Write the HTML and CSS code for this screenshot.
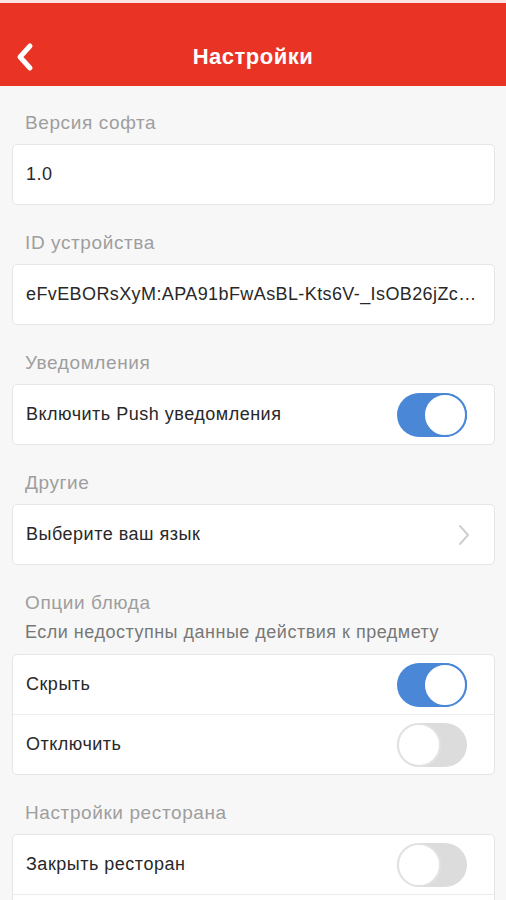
FILE: index.html
```html
<!DOCTYPE html>
<html lang="ru">
<head>
    <meta charset="UTF-8">
    <meta name="viewport" content="width=device-width, initial-scale=1.0">
    <title>Настройки</title>
    <link rel="stylesheet" href="styles.css">
</head>
<body>
    <header class="topbar">
        <div class="nav">
            <button class="back" aria-label="Назад">
                <svg width="22" height="32" viewBox="0 0 22 32">
                    <polyline points="16,5 6,16 16,27" fill="none" stroke="#fff" stroke-width="5" stroke-linecap="round" stroke-linejoin="round"/>
                </svg>
            </button>
            <div class="title">Настройки</div>
        </div>
    </header>

    <main class="content">
        <div class="label">Версия софта</div>
        <div class="card">
            <div class="row">1.0</div>
        </div>

        <div class="label">ID устройства</div>
        <div class="card">
            <div class="row"><span class="ellipsis">eFvEBORsXyM:APA91bFwAsBL-Kts6V-_IsOB26jZc…</span></div>
        </div>

        <div class="label">Уведомления</div>
        <div class="card">
            <div class="row">
                <span>Включить Push уведомления</span>
                <span class="toggle on"><span class="knob"></span></span>
            </div>
        </div>

        <div class="label">Другие</div>
        <div class="card">
            <div class="row">
                <span>Выберите ваш язык</span>
                <svg class="arrow" width="14" height="24" viewBox="0 0 14 24">
                    <polyline points="3,3 11,12 3,21" fill="none" stroke="#cfcfcf" stroke-width="2" stroke-linecap="round" stroke-linejoin="round"/>
                </svg>
            </div>
        </div>

        <div class="label">Опции блюда</div>
        <div class="hint">Если недоступны данные действия к предмету</div>
        <div class="card">
            <div class="row">
                <span>Скрыть</span>
                <span class="toggle on"><span class="knob"></span></span>
            </div>
            <div class="row">
                <span>Отключить</span>
                <span class="toggle"><span class="knob"></span></span>
            </div>
        </div>

        <div class="label">Настройки ресторана</div>
        <div class="card">
            <div class="row">
                <span>Закрыть ресторан</span>
                <span class="toggle"><span class="knob"></span></span>
            </div>
            <div class="row"></div>
        </div>
    </main>
</body>
</html>
```

FILE: styles.css
```css
body {
    margin: 0;
    font-family: "Liberation Sans", Arial, sans-serif;
    background-color: #f7f7f7;
    color: #282828;
}

.topbar {
    border-top: 3px solid #fbe4e1;
    background-color: #e93324;
    padding-top: 25px;
}

.nav {
    display: flex;
    align-items: center;
    justify-content: center;
    position: relative;
    height: 58px;
}

.back {
    position: absolute;
    left: 14px;
    top: 0;
    bottom: 0;
    background: none;
    border: none;
    padding: 0;
    display: flex;
    align-items: center;
}

.title {
    color: #fff;
    font-size: 22px;
    font-weight: bold;
    letter-spacing: 0.5px;
}

.content {
    padding: 27px 11px 0 12px;
}

.label {
    color: #9e9e9e;
    font-size: 19px;
    letter-spacing: 0.6px;
    line-height: 20px;
    padding-left: 13px;
    margin-bottom: 11px;
}

.card + .label {
    margin-top: 28px;
}

.hint {
    color: #777;
    font-size: 18px;
    letter-spacing: 0.5px;
    line-height: 20px;
    padding-left: 13px;
    margin-top: -2px;
    margin-bottom: 12px;
}

.card {
    background-color: #fff;
    border: 1px solid #e6e6e6;
    border-radius: 5px;
}

.row {
    display: flex;
    align-items: center;
    justify-content: space-between;
    height: 59px;
    padding: 0 27px 0 13px;
    font-size: 18px;
    letter-spacing: 0.5px;
}

.row + .row {
    border-top: 1px solid #ececec;
}

.ellipsis {
    overflow: hidden;
    white-space: nowrap;
    text-overflow: ellipsis;
    margin-right: -13px;
    letter-spacing: 0.4px;
}

.arrow {
    margin-right: -4px;
}

.toggle {
    display: flex;
    width: 70px;
    height: 44px;
    box-sizing: border-box;
    border-radius: 22px;
    background-color: #dcdcdc;
    flex-shrink: 0;
}

.knob {
    width: 44px;
    height: 44px;
    box-sizing: border-box;
    border-radius: 50%;
    background-color: #fff;
    border: 2px solid #e2e2e2;
}

.toggle.on {
    background-color: #4a87d6;
    justify-content: flex-end;
}

.toggle.on .knob {
    border-color: #4a87d6;
}
```
